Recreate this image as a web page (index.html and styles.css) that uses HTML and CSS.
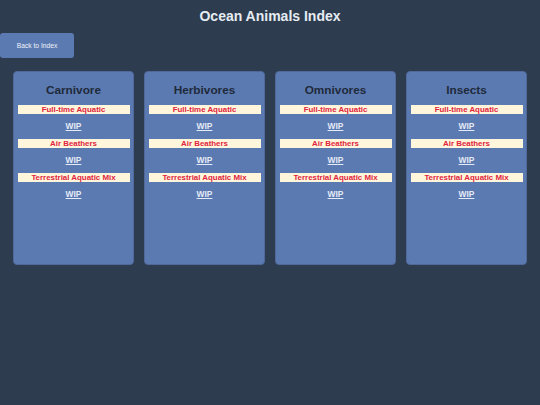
FILE: index.html
```html
<!DOCTYPE html>
<html lang="en">
<head>
    <meta charset="UTF-8">
    <meta name="viewport" content="width=device-width, initial-scale=1.0">
    <title>Ocean Animals Index</title>
    <link rel="stylesheet" href="styles.css">
</head>
<body>
    <h1 class="pageTitle">Ocean Animals Index</h1>
    <a class="backButton" href="#">Back to Index</a>
    <div class="cardRow">
        <div class="dietCard">
            <h2 class="dietTitle">Carnivore</h2>
            <div class="habitatLabel">Full-time Aquatic</div>
            <a class="wipLink" href="#">WIP</a>
            <div class="habitatLabel">Air Beathers</div>
            <a class="wipLink" href="#">WIP</a>
            <div class="habitatLabel">Terrestrial Aquatic Mix</div>
            <a class="wipLink" href="#">WIP</a>
        </div>
        <div class="dietCard">
            <h2 class="dietTitle">Herbivores</h2>
            <div class="habitatLabel">Full-time Aquatic</div>
            <a class="wipLink" href="#">WIP</a>
            <div class="habitatLabel">Air Beathers</div>
            <a class="wipLink" href="#">WIP</a>
            <div class="habitatLabel">Terrestrial Aquatic Mix</div>
            <a class="wipLink" href="#">WIP</a>
        </div>
        <div class="dietCard">
            <h2 class="dietTitle">Omnivores</h2>
            <div class="habitatLabel">Full-time Aquatic</div>
            <a class="wipLink" href="#">WIP</a>
            <div class="habitatLabel">Air Beathers</div>
            <a class="wipLink" href="#">WIP</a>
            <div class="habitatLabel">Terrestrial Aquatic Mix</div>
            <a class="wipLink" href="#">WIP</a>
        </div>
        <div class="dietCard">
            <h2 class="dietTitle">Insects</h2>
            <div class="habitatLabel">Full-time Aquatic</div>
            <a class="wipLink" href="#">WIP</a>
            <div class="habitatLabel">Air Beathers</div>
            <a class="wipLink" href="#">WIP</a>
            <div class="habitatLabel">Terrestrial Aquatic Mix</div>
            <a class="wipLink" href="#">WIP</a>
        </div>
    </div>
</body>
</html>
```

FILE: styles.css
```css
html, body {
    font-family: "Liberation Sans", Arial, sans-serif;
    background-color: #2d3c4e;
    margin: 0;
    padding: 0;
}
h1.pageTitle {
    margin: 0;
    padding-top: 8px;
    font-size: 14px;
    line-height: 17px;
    text-align: center;
    color: #e6ecf3;
}
a.backButton {
    display: flex;
    align-items: center;
    justify-content: center;
    width: 74px;
    height: 25px;
    margin-top: 8px;
    background-color: #5c7ab2;
    border-radius: 3px;
    color: #eef2f8;
    font-size: 6.7px;
    text-decoration: none;
}
div.cardRow {
    display: flex;
    gap: 10px;
    padding: 13px 0 0 13px;
}
div.dietCard {
    box-sizing: border-box;
    width: 121px;
    height: 194px;
    padding: 11px 3.5px 0 3.5px;
    background-color: #5c7ab2;
    border: 1px solid #51699a;
    border-radius: 4px;
    display: flex;
    flex-direction: column;
    align-items: center;
    gap: 8px;
}
h2.dietTitle {
    margin: 0;
    font-size: 11.8px;
    line-height: 14px;
    color: #1e2a3a;
}
div.habitatLabel {
    align-self: stretch;
    height: 9px;
    line-height: 9px;
    background-color: #fff6dc;
    color: #e0243d;
    font-size: 7.9px;
    font-weight: bold;
    text-align: center;
}
a.wipLink {
    height: 9px;
    line-height: 9px;
    color: #e4eaf6;
    font-size: 8.4px;
    font-weight: bold;
}
```
